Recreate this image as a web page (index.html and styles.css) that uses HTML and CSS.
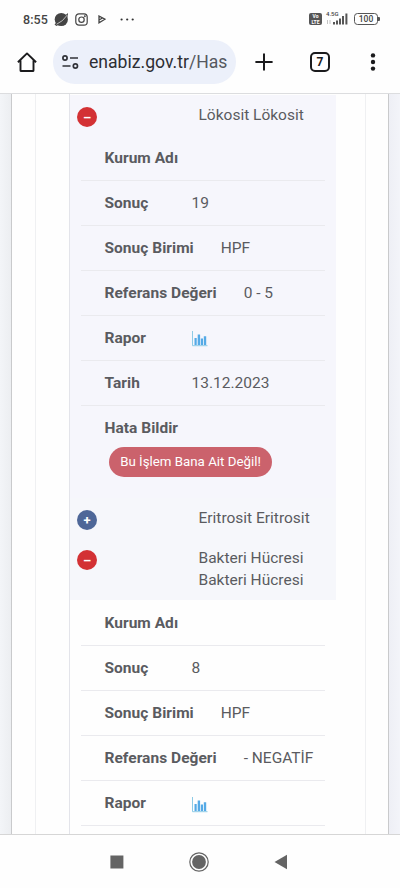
FILE: index.html
```html
<!DOCTYPE html>
<html lang="tr">
<head>
<meta charset="utf-8">
<title>enabiz.gov.tr</title>
<link rel="stylesheet" href="styles.css">
</head>
<body>
<svg class="defs" width="0" height="0">
  <symbol id="chart" viewBox="0 0 16 16">
    <path d="M.5 0V14.7H15.5" fill="none" stroke="#8dcbe6" stroke-width="1"/>
    <path d="M2.5 7h2.2v7H2.5zM5.7 3.5h2.4v10.5H5.7zM8.8 7.5h2.2v6.5H8.8zM11.8 5.3h2.4v8.7h-2.4z" fill="#55aae6"/>
  </symbol>
</svg>
<div class="status">
  <span class="time">8:55</span>
  <svg class="planet" width="15" height="15" viewBox="0 0 15 15"><circle cx="7.3" cy="7.5" r="6.6" fill="#444"/><path d="M.5 12.2L2.2 14L5 12.8L12 7Q14.5 3.5 14 1" fill="#444"/><path d="M2.5 12.3Q9 9.5 13.3 3" fill="none" stroke="#eee" stroke-width=".7"/></svg>
  <svg class="insta" width="13" height="13" viewBox="0 0 13 13" fill="none" stroke="#444" stroke-width="1.2"><rect x=".8" y=".8" width="11.4" height="11.4" rx="3.2"/><circle cx="6.5" cy="6.7" r="2.7"/><circle cx="9.8" cy="3.3" r=".4"/></svg>
  <svg class="play" width="8" height="9" viewBox="0 0 8 9"><path d="M1 1L7 4.2L1 7.8ZM1 5L4.5 3" fill="none" stroke="#444" stroke-width="1.3"/></svg>
  <svg class="dots" width="15" height="3" viewBox="0 0 15 3" fill="#333"><circle cx="1.6" cy="1.5" r="1.1"/><circle cx="7.2" cy="1.5" r="1.1"/><circle cx="12.7" cy="1.5" r="1.1"/></svg>
  <span class="volte"><span>Vo</span><span>LTE</span></span>
  <span class="signal">
    <span class="net">4.5G</span>
    <svg width="22" height="12" viewBox="0 0 22 12" fill="#555"><path d="M7 9h2v2.5H7zM10 7.5h2v4h-2zM13 5.5h2v6h-2zM16 3h2v8.5h-2zM19.4.5h2v11h-2z"/><path d="M1.5 7v4M4 7v4" stroke="#aaa" stroke-width=".7"/></svg>
  </span>
  <span class="battery">100</span><span class="cap"></span>
</div>
<div class="toolbar">
  <svg class="home" width="20" height="20" viewBox="0 0 20 20" fill="none" stroke="#1b1b1d" stroke-width="1.9"><path d="M.9 10.2L10 1.4L19.1 10.2M3.5 8.5V18.4Q3.5 19 4.2 19H15.8Q16.5 19 16.5 18.4V8.5" stroke-linejoin="round"/></svg>
  <div class="url">
    <svg width="17" height="14" viewBox="0 0 17 14" fill="none" stroke="#303238" stroke-width="1.7"><circle cx="3" cy="3" r="2.1"/><path d="M8 3h8M.5 11h8"/><circle cx="13.4" cy="11" r="2.1"/></svg>
    <span class="host">enabiz.gov.tr<span class="path">/Has</span></span>
  </div>
  <svg class="plus" width="18" height="18" viewBox="0 0 18 18" stroke="#1b1b1d" stroke-width="2"><path d="M9 .4V17.6M.4 9H17.6"/></svg>
  <span class="tabs">7</span>
  <svg class="more" width="6" height="20" viewBox="0 0 6 20" fill="#1b1b1d"><circle cx="3" cy="3.4" r="2.2"/><circle cx="3" cy="10" r="2.2"/><circle cx="3" cy="16.6" r="2.2"/></svg>
</div>
<main class="page">
  <div class="card">
    <div class="inner">
      <div class="table">
        <div class="shade violet">
          <div class="head first"><span class="btn red">–</span><span class="name">Lökosit Lökosit</span></div>
          <div class="details">
            <div class="row"><b>Kurum Adı</b></div>
            <div class="row"><b>Sonuç</b><span>19</span></div>
            <div class="row"><b>Sonuç Birimi</b><span>HPF</span></div>
            <div class="row"><b>Referans Değeri</b><span>0 - 5</span></div>
            <div class="row"><b>Rapor</b><svg class="chart"><use href="#chart"/></svg></div>
            <div class="row"><b>Tarih</b><span>13.12.2023</span></div>
            <div class="row report"><b>Hata Bildir</b><span class="pill">Bu İşlem Bana Ait Değil!</span></div>
          </div>
        </div>
        <div class="shade">
          <div class="head"><span class="btn blue">+</span><span class="name">Eritrosit Eritrosit</span></div>
          <div class="head tall"><span class="btn red">–</span><span class="name">Bakteri Hücresi<br>Bakteri Hücresi</span></div>
        </div>
        <div class="details second">
          <div class="row"><b>Kurum Adı</b></div>
          <div class="row"><b>Sonuç</b><span>8</span></div>
          <div class="row"><b>Sonuç Birimi</b><span>HPF</span></div>
          <div class="row"><b>Referans Değeri</b><span>- NEGATİF</span></div>
          <div class="row"><b>Rapor</b><svg class="chart"><use href="#chart"/></svg></div>
        </div>
      </div>
    </div>
  </div>
</main>
<nav class="nav">
  <svg width="14" height="14" viewBox="0 0 14 14"><rect x=".4" y=".5" width="13" height="13" fill="#646464"/></svg>
  <svg width="20" height="20" viewBox="0 0 20 20"><circle cx="10" cy="10" r="9.2" fill="none" stroke="#646464" stroke-width="1.2"/><circle cx="10" cy="10" r="6.9" fill="#646464"/></svg>
  <svg width="14" height="16" viewBox="0 0 14 16"><path d="M.5 8L13 .8V15.2Z" fill="#646464"/></svg>
</nav>
</body>
</html>
```
FILE: styles.css
```css
* { box-sizing: border-box; }
body {
  margin: 0;
  width: 400px;
  height: 888px;
  overflow: hidden;
  display: flex;
  flex-direction: column;
  background: #fefefe;
  font-family: Roboto, "Liberation Sans", sans-serif;
  font-size: 15.5px;
  color: #5a5b60;
}
svg { display: block; flex: none; }
.defs { display: none; }
.status {
  height: 38px;
  flex: none;
  display: flex;
  align-items: center;
  padding: 0 20px 0 23px;
}
.time { font-size: 12.5px; font-weight: 500; color: #444; width: 31px; letter-spacing: .1px; }
.insta { margin-left: 6px; }
.play { margin-left: 10px; }
.dots { margin-left: 14px; }
.volte {
  margin-left: auto;
  width: 13px;
  height: 12px;
  border-radius: 2px;
  background: #555;
  color: #fff;
  font-size: 5px;
  line-height: 6px;
  font-weight: 700;
  display: flex;
  flex-direction: column;
  align-items: center;
  justify-content: center;
}
.signal { margin-left: 4px; width: 23px; height: 14px; display: grid; }
.signal > * { grid-area: 1 / 1; }
.signal svg { align-self: end; margin-bottom: 1px; }
.net { font-size: 6px; line-height: 6px; font-weight: 500; color: #444; align-self: start; margin-top: -1px; }
.battery {
  margin-left: 5px;
  width: 24px;
  height: 12px;
  border: 1.3px solid #555;
  border-radius: 3.5px;
  font-size: 8.5px;
  line-height: 10px;
  font-weight: 500;
  text-align: center;
  color: #444;
}
.cap { width: 2px; height: 4px; background: #555; border-radius: 0 1px 1px 0; }
.toolbar {
  height: 56px;
  flex: none;
  display: flex;
  align-items: center;
  padding: 0 24px 8px 17px;
  border-bottom: 1px solid #dcdddf;
}
.url {
  margin-left: 16px;
  width: 183px;
  height: 44px;
  flex: none;
  border-radius: 22px;
  background: #ecf0fa;
  display: flex;
  align-items: center;
  padding-left: 9px;
}
.host { margin-left: 10px; font-size: 17.6px; color: #2c2e33; white-space: nowrap; }
.path { color: #55585f; }
.plus { margin-left: 19px; }
.tabs {
  margin-left: 37px;
  width: 20px;
  height: 20px;
  border: 2px solid #1b1b1d;
  border-radius: 5px;
  font-size: 12px;
  line-height: 16px;
  font-weight: 700;
  text-align: center;
  color: #1b1b1d;
}
.more { margin-left: auto; }
.page {
  height: 740px;
  flex: none;
  overflow: hidden;
  padding: 0 11px;
  background: linear-gradient(90deg, #f3f5f8 0, #eceef1 11px, #eeeff5 389px, #f3f4f9 400px);
}
.card {
  height: 100%;
  background: #fefefe;
  border: solid #c9cacc;
  border-width: 0 1px;
  padding: 0 22.5px 0 23px;
}
.inner {
  height: 100%;
  border: solid #eff0f2;
  border-width: 0 1px;
  padding: 0 28.5px 0 33px;
}
.table {
  height: 100%;
  border-left: 1px solid #e3e4ea;
  padding-top: 1px;
}
.shade { background: #f6f7fb; }
.violet { background: #f6f6fc; }
.head {
  display: flex;
  align-items: flex-start;
  height: 40px;
  padding: 9px 0 0 7px;
  line-height: 22px;
}
.first { height: 40.5px; }
.tall { height: 62px; }
.name { margin-left: 101.5px; }
.btn {
  width: 20px;
  height: 20px;
  margin-top: 3px;
  border-radius: 50%;
  flex: none;
  color: #fff;
  font-size: 13px;
  line-height: 22px;
  font-weight: 700;
  text-align: center;
}
.red { background: #d33134; }
.blue { background: #4e6798; }
.details { padding: 0 11px; }
.second { padding-top: 1px; }
.row {
  height: 45.1px;
  display: flex;
  align-items: center;
  padding-left: 23.5px;
  border-bottom: 1px solid #eaeaee;
  white-space: nowrap;
}
.row b { min-width: 60px; margin-right: 27px; font-weight: 700; letter-spacing: .03px; }
.chart { width: 16px; height: 16px; margin-top: 3px; }
.report {
  height: 91.9px;
  flex-direction: column;
  align-items: flex-start;
  padding-top: 13px;
  border: 0;
}
.pill {
  margin: 10px 0 0 4.5px;
  height: 30px;
  width: 163px;
  border-radius: 15px;
  background: #cb626c;
  color: #fff;
  font-size: 13.3px;
  line-height: 30px;
  text-align: center;
}
.nav {
  flex: 1;
  display: flex;
  align-items: center;
  justify-content: space-between;
  padding: 0 112px 0 110px;
  border-top: 1px solid #d6d6d6;
}
```
